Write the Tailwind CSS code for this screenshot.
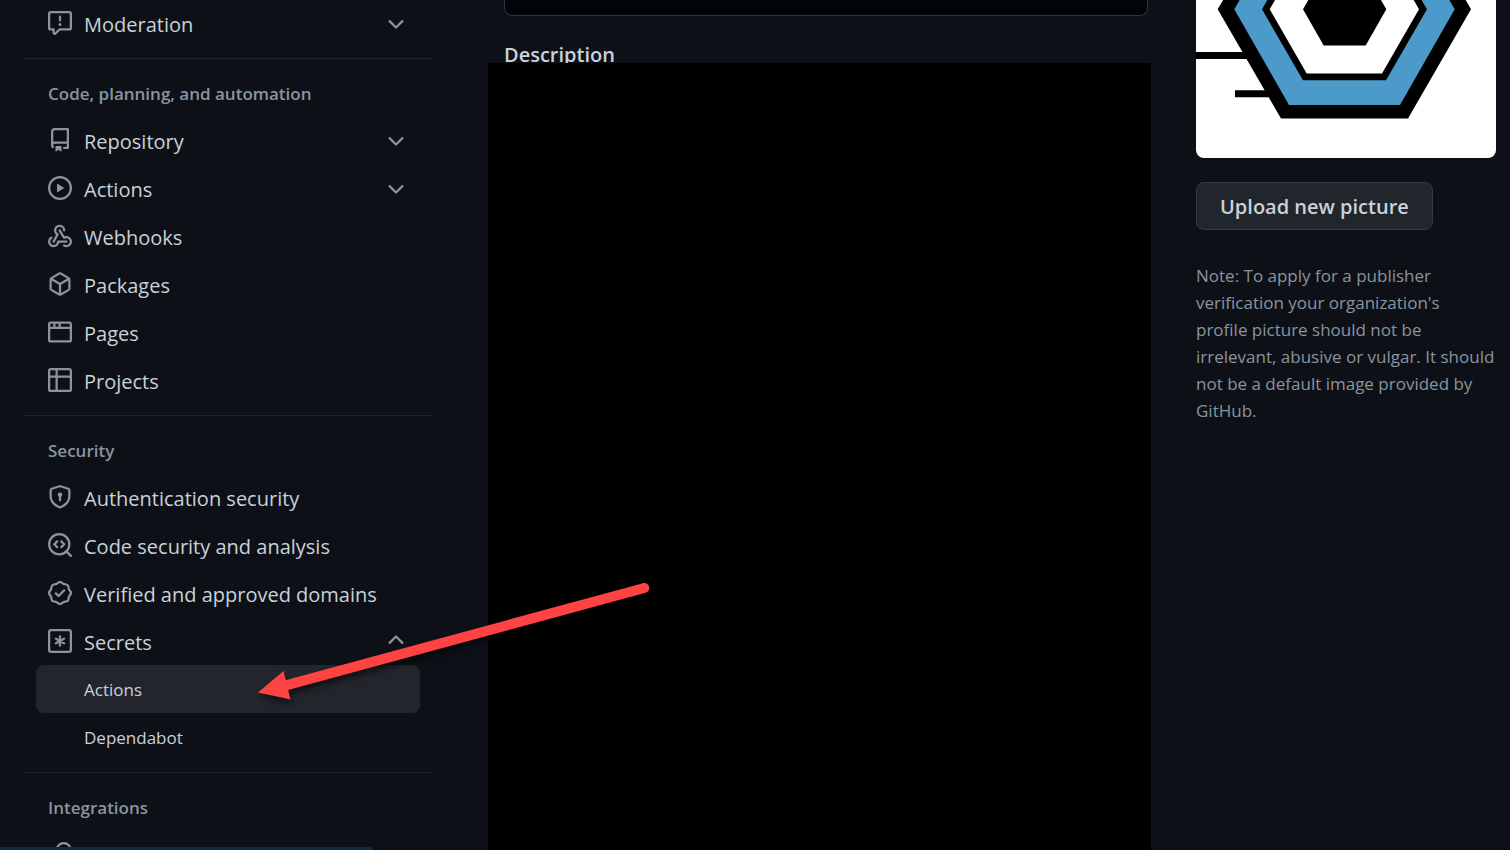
<!DOCTYPE html>
<html lang="en">
<head>
<meta charset="utf-8">
<title>Organization settings</title>
<script src="https://cdn.jsdelivr.net/npm/@tailwindcss/browser@4"></script>
</head>
<body class="bg-[#0d1117] text-[#c9d1d9] font-['Segoe_UI','Open_Sans',sans-serif] [fill-rule:evenodd]">
<svg class="hidden" aria-hidden="true">
  <symbol id="down" viewBox="0 0 16 16"><path d="M12.78 6.22a.75.75 0 010 1.06l-4.25 4.25a.75.75 0 01-1.06 0L3.22 7.28a.75.75 0 011.06-1.06L8 9.94l3.72-3.72a.75.75 0 011.06 0z"/></symbol>
  <symbol id="up" viewBox="0 0 16 16"><path d="M3.22 9.78a.75.75 0 010-1.06l4.25-4.25a.75.75 0 011.06 0l4.25 4.25a.75.75 0 01-1.06 1.06L8 6.06 4.28 9.78a.75.75 0 01-1.06 0z"/></symbol>
</svg>
<div class="relative flex h-screen overflow-hidden pl-6 pr-3.5">
  <nav aria-label="Settings" class="w-[408px] shrink-0 text-[20px] leading-7">
    <ul class="px-3">
      <li><button type="button" class="flex h-12 w-full items-start gap-3 rounded-lg px-3 py-[11px] text-left">
        <svg class="size-6 fill-[#8b949e]" viewBox="0 0 16 16"><path d="M1.75 1.5a.25.25 0 00-.25.25v9.5c0 .138.112.25.25.25h2a.75.75 0 01.75.75v2.19l2.72-2.72a.75.75 0 01.53-.22h6.5a.25.25 0 00.25-.25v-9.5a.25.25 0 00-.25-.25H1.75zM0 1.75C0 .784.784 0 1.75 0h12.5C15.216 0 16 .784 16 1.75v9.5A1.75 1.75 0 0114.25 13H8.06l-2.573 2.573A1.457 1.457 0 013 14.543V13H1.75A1.75 1.75 0 010 11.25v-9.5zM9 9a1 1 0 11-2 0 1 1 0 012 0zm-.25-5.25a.75.75 0 00-1.5 0v2.5a.75.75 0 001.5 0v-2.5z"/></svg>
        <span class="flex-1">Moderation</span><svg class="size-6 fill-[#8b949e]"><use href="#down"/></svg></button></li>
    </ul>
    <hr class="mt-2.5 border-[#1f242b]">
    <h3 class="flex h-[58px] items-center px-6 pt-3 text-[17px] font-semibold text-[#8b949e]">Code, planning, and automation</h3>
    <ul class="px-3">
      <li><button type="button" class="flex h-12 w-full items-start gap-3 rounded-lg px-3 py-[11px] text-left">
        <svg class="size-6 fill-[#8b949e]" viewBox="0 0 16 16"><path d="M2 2.5A2.5 2.5 0 014.5 0h8.75a.75.75 0 01.75.75v12.5a.75.75 0 01-.75.75h-2.5a.75.75 0 110-1.5h1.75v-2h-8a1 1 0 00-.714 1.7.75.75 0 01-1.072 1.05A2.495 2.495 0 012 11.5v-9zm10.5-1V9h-8c-.356 0-.694.074-1 .208V2.5a1 1 0 011-1h8zM5 12.25v3.25a.25.25 0 00.4.2l1.45-1.087a.25.25 0 01.3 0L8.6 15.7a.25.25 0 00.4-.2v-3.25a.25.25 0 00-.25-.25h-3.5a.25.25 0 00-.25.25z"/></svg>
        <span class="flex-1">Repository</span><svg class="size-6 fill-[#8b949e]"><use href="#down"/></svg></button></li>
      <li><button type="button" class="flex h-12 w-full items-start gap-3 rounded-lg px-3 py-[11px] text-left">
        <svg class="size-6 fill-[#8b949e]" viewBox="0 0 16 16"><path d="M1.5 8a6.5 6.5 0 1113 0 6.5 6.5 0 01-13 0zM8 0a8 8 0 100 16A8 8 0 008 0zM6.379 5.227A.25.25 0 006 5.442v5.117a.25.25 0 00.379.214l4.264-2.559a.25.25 0 000-.428L6.379 5.227z"/></svg>
        <span class="flex-1">Actions</span><svg class="size-6 fill-[#8b949e]"><use href="#down"/></svg></button></li>
      <li><a href="#webhooks" class="flex h-12 items-start gap-3 rounded-lg px-3 py-[11px]">
        <svg class="size-6 fill-[#8b949e]" viewBox="0 0 16 16"><path d="M5.5 4.25a2.25 2.25 0 014.5 0 .75.75 0 001.5 0 3.75 3.75 0 10-6.14 2.889l-2.272 4.258a.75.75 0 001.324.706L7 7.25a.75.75 0 00-.309-1.015A2.25 2.25 0 015.5 4.25z"/><path d="M7.364 3.607a.75.75 0 011.03.257l2.608 4.349a3.75 3.75 0 11-.628 6.785.75.75 0 01.752-1.299 2.25 2.25 0 10-.033-3.88.75.75 0 01-1.03-.256L7.107 4.636a.75.75 0 01.257-1.03z"/><path d="M2.9 8.776A.75.75 0 012.625 9.8 2.25 2.25 0 106 11.75a.75.75 0 01.75-.751h5.5a.75.75 0 010 1.5H7.425a3.751 3.751 0 11-5.55-3.998.75.75 0 011.024.274z"/></svg>
        <span>Webhooks</span></a></li>
      <li><a href="#packages" class="flex h-12 items-start gap-3 rounded-lg px-3 py-[11px]">
        <svg class="size-6 fill-[#8b949e]" viewBox="0 0 16 16"><path d="M8.878.392a1.75 1.75 0 00-1.756 0l-5.25 3.045A1.75 1.75 0 001 4.951v6.098c0 .624.332 1.2.872 1.514l5.25 3.045a1.75 1.75 0 001.756 0l5.25-3.045c.54-.313.872-.89.872-1.514V4.951c0-.624-.332-1.2-.872-1.514L8.878.392zM7.875 1.69a.25.25 0 01.25 0l4.63 2.685L8 7.133 3.245 4.375l4.63-2.685zM2.5 5.677v5.372c0 .09.047.171.125.216l4.625 2.683V8.432L2.5 5.677zm6.25 8.271l4.625-2.683a.25.25 0 00.125-.216V5.677L8.75 8.432v5.516z"/></svg>
        <span>Packages</span></a></li>
      <li><a href="#pages" class="flex h-12 items-start gap-3 rounded-lg px-3 py-[11px]">
        <svg class="size-6 fill-[#8b949e]" viewBox="0 0 16 16"><path d="M0 2.75C0 1.784.784 1 1.75 1h12.5c.966 0 1.75.784 1.75 1.75v10.5A1.75 1.75 0 0114.25 15H1.75A1.75 1.75 0 010 13.25V2.75zm1.75-.25a.25.25 0 00-.25.25V4.5h2v-2H1.75zM5 2.5v2h2v-2H5zm3.5 0v2h6V2.75a.25.25 0 00-.25-.25H8.5zm6 3.5h-13v7.25c0 .138.112.25.25.25h12.5a.25.25 0 00.25-.25V6z"/></svg>
        <span>Pages</span></a></li>
      <li><a href="#projects" class="flex h-12 items-start gap-3 rounded-lg px-3 py-[11px]">
        <svg class="size-6 fill-[#8b949e]" viewBox="0 0 16 16"><path d="M0 1.75C0 .784.784 0 1.75 0h12.5C15.216 0 16 .784 16 1.75v12.5A1.75 1.75 0 0114.25 16H1.75A1.75 1.75 0 010 14.25V1.75zM1.5 6.5v7.75c0 .138.112.25.25.25H5v-8H1.5zM5 5H1.5V1.75a.25.25 0 01.25-.25H5V5zm1.5 1.5v8h7.75a.25.25 0 00.25-.25V6.5h-8zm8-1.5h-8V1.5h7.75a.25.25 0 01.25.25V5z"/></svg>
        <span>Projects</span></a></li>
    </ul>
    <hr class="mt-2.5 border-[#1f242b]">
    <h3 class="flex h-[58px] items-center px-6 pt-3 text-[17px] font-semibold text-[#8b949e]">Security</h3>
    <ul class="px-3">
      <li><a href="#authentication" class="flex h-12 items-start gap-3 rounded-lg px-3 py-[11px]">
        <svg class="size-6 fill-[#8b949e]" viewBox="0 0 16 16"><path d="M7.467.133a1.75 1.75 0 011.066 0l5.25 1.68A1.75 1.75 0 0115 3.48V7c0 1.566-.32 3.182-1.303 4.682-.983 1.498-2.585 2.813-5.032 3.855a1.7 1.7 0 01-1.33 0c-2.447-1.042-4.049-2.357-5.032-3.855C1.32 10.182 1 8.566 1 7V3.48a1.75 1.75 0 011.217-1.667l5.25-1.68zm.61 1.429a.25.25 0 00-.153 0l-5.25 1.68a.25.25 0 00-.174.238V7c0 1.358.275 2.666 1.057 3.86.784 1.194 2.121 2.34 4.366 3.297a.2.2 0 00.154 0c2.245-.956 3.582-2.104 4.366-3.298C13.225 9.666 13.5 8.36 13.5 7V3.48a.25.25 0 00-.174-.237l-5.25-1.68zM9.5 6.5a1.5 1.5 0 01-.75 1.3v2.45a.75.75 0 01-1.5 0V7.8A1.5 1.5 0 119.5 6.5z"/></svg>
        <span>Authentication security</span></a></li>
      <li><a href="#analysis" class="flex h-12 items-start gap-3 rounded-lg px-3 py-[11px]">
        <svg class="size-6 fill-none stroke-[#8b949e] stroke-[1.5]" viewBox="0 0 16 16" stroke-linecap="round" stroke-linejoin="round"><circle cx="7.5" cy="7.5" r="6.75"/><path d="M12.4 12.4l2.85 2.85M6.1 5.6L4.2 7.5l1.9 1.9M8.9 5.6l1.9 1.9-1.9 1.9"/></svg>
        <span>Code security and analysis</span></a></li>
      <li><a href="#domains" class="flex h-12 items-start gap-3 rounded-lg px-3 py-[11px]">
        <svg class="size-6 fill-[#8b949e]" viewBox="0 0 16 16"><path d="M9.585.52a2.678 2.678 0 00-3.17 0l-.928.68a1.178 1.178 0 01-.518.215L3.83 1.59a2.678 2.678 0 00-2.24 2.24l-.175 1.14a1.178 1.178 0 01-.215.518l-.68.928a2.678 2.678 0 000 3.17l.68.928c.113.153.186.33.215.518l.175 1.138a2.678 2.678 0 002.24 2.24l1.138.175c.187.029.365.102.518.215l.928.68a2.678 2.678 0 003.17 0l.928-.68a1.17 1.17 0 01.518-.215l1.138-.175a2.678 2.678 0 002.241-2.241l.175-1.138c.029-.187.102-.365.215-.518l.68-.928a2.678 2.678 0 000-3.17l-.68-.928a1.179 1.179 0 01-.215-.518L14.41 3.83a2.678 2.678 0 00-2.24-2.24l-1.138-.175a1.179 1.179 0 01-.518-.215L9.585.52zM7.303 1.728c.415-.305.98-.305 1.394 0l.928.68c.348.256.752.423 1.18.489l1.136.174c.51.078.909.478.987.987l.174 1.137c.066.427.233.831.489 1.18l.68.927c.305.415.305.98 0 1.394l-.68.928a2.678 2.678 0 00-.489 1.18l-.174 1.136a1.178 1.178 0 01-.987.987l-1.137.174a2.678 2.678 0 00-1.18.489l-.927.68c-.415.305-.98.305-1.394 0l-.928-.68a2.678 2.678 0 00-1.18-.489l-1.136-.174a1.178 1.178 0 01-.987-.987l-.174-1.137a2.678 2.678 0 00-.489-1.18l-.68-.927a1.178 1.178 0 010-1.394l.68-.928c.256-.348.423-.752.489-1.18l.174-1.136c.078-.51.478-.909.987-.987l1.137-.174a2.678 2.678 0 001.18-.489l.927-.68zM11.28 6.78a.75.75 0 00-1.06-1.06L7 8.94 5.78 7.72a.75.75 0 00-1.06 1.06l1.75 1.75a.75.75 0 001.06 0l3.75-3.75z"/></svg>
        <span>Verified and approved domains</span></a></li>
      <li><button type="button" aria-expanded="true" class="flex h-12 w-full items-start gap-3 rounded-lg px-3 py-[11px] text-left">
        <svg class="size-6 fill-none stroke-[#8b949e] stroke-[1.5]" viewBox="0 0 16 16" stroke-linecap="round"><rect x=".75" y=".75" width="14.5" height="14.5" rx="1.4"/><path d="M8 4.9v6.2M5.3 6.45l5.4 3.1M10.7 6.45L5.3 9.55"/></svg>
        <span class="flex-1">Secrets</span><svg class="size-6 fill-[#8b949e]"><use href="#up"/></svg></button>
        <ul class="-mt-px pb-px text-[17px]">
          <li><a href="#secrets-actions" aria-current="page" class="flex h-12 items-center rounded-lg bg-[#22262c] px-12 pt-0.5">Actions</a></li>
          <li><a href="#secrets-dependabot" class="flex h-12 items-center rounded-lg px-12 pt-0.5">Dependabot</a></li>
        </ul></li>
    </ul>
    <hr class="mt-2.5 border-[#1f242b]">
    <h3 class="flex h-[58px] items-center px-6 pt-3 text-[17px] font-semibold text-[#8b949e]">Integrations</h3>
    <ul class="px-3">
      <li><a href="#integrations" aria-label="Integrations" class="flex h-12 items-start px-3 py-[11px]">
        <svg class="size-6 fill-none stroke-[#8b949e] stroke-[1.5]" viewBox="0 0 16 16"><circle cx="10.5" cy="5.5" r="4.75"/><path d="M7 9L.75 15.25"/></svg></a></li>
    </ul>
  </nav>

  <main class="ml-14 flex min-w-0 flex-1 flex-col">
    <div class="h-4 shrink-0 pl-4 pr-[3px]"><input type="text" aria-label="Name" class="block h-full w-full rounded-b-lg border border-t-0 border-[#30363d] bg-[#010409] px-4"></div>
    <label for="description" class="h-[47px] shrink-0 pl-4 pt-[25px] text-[20px] leading-7 font-semibold">Description</label>
    <textarea id="description" class="relative block w-full flex-1 resize-none bg-black outline-none"></textarea>
  </main>

  <aside class="ml-[45px] w-[300px] shrink-0">
    <svg class="block w-full rounded-b-lg bg-white" viewBox="0 0 300 158" role="img" aria-label="Organization picture">
      <path d="M0 52h70v7H0zM39 90.3h45v7H39z"/>
      <path d="M21.7 9.3L85 118.5h127L275 9.3 212-100H85z"/>
      <path fill="#4b9aca" d="M38.3 9.3L93 105h111l54.7-95.7L204-86H93z"/>
      <path d="M66 9.3l41 71h83l41-71-41-71h-83z"/>
      <path fill="#fff" d="M73.7 9.3l37 64.3h75.3l37-64.3-37-64.3h-75.3z"/>
      <path d="M107 9.3l20.7 36.1h42l20.6-36.1-20.6-36.1h-42z"/>
    </svg>
    <button type="button" class="mt-6 block h-12 rounded-lg border border-[#363b42] bg-[#21262d] px-[23px] pt-0.5 text-[20px] font-semibold">Upload new picture</button>
    <p class="mt-8 text-[17px] leading-[27px] text-[#8b949e]">Note: To apply for a publisher verification your organization's<br>profile picture should not be irrelevant, abusive or vulgar. It should not be a default image provided by GitHub.</p>
  </aside>

  <svg class="pointer-events-none absolute left-[250px] top-[575px] h-[135px] w-[410px] fill-[#ff4343] drop-shadow-[2px_4px_3px_rgba(0,0,0,0.6)]" viewBox="250 575 410 135" aria-hidden="true">
    <path d="M258 692.5l25.5-21.5 7 28.5z"/><path d="M284 685.9L644.3 588" fill="none" stroke="#ff4343" stroke-width="10"/><circle cx="644.3" cy="588" r="5"/>
  </svg>
  <div class="absolute inset-x-0 bottom-0 h-px bg-black/40"></div>
  <div class="absolute bottom-0 left-0 h-[3px] w-[373px] rounded-tr bg-[#092d48]"></div>
</div>
</body>
</html>
